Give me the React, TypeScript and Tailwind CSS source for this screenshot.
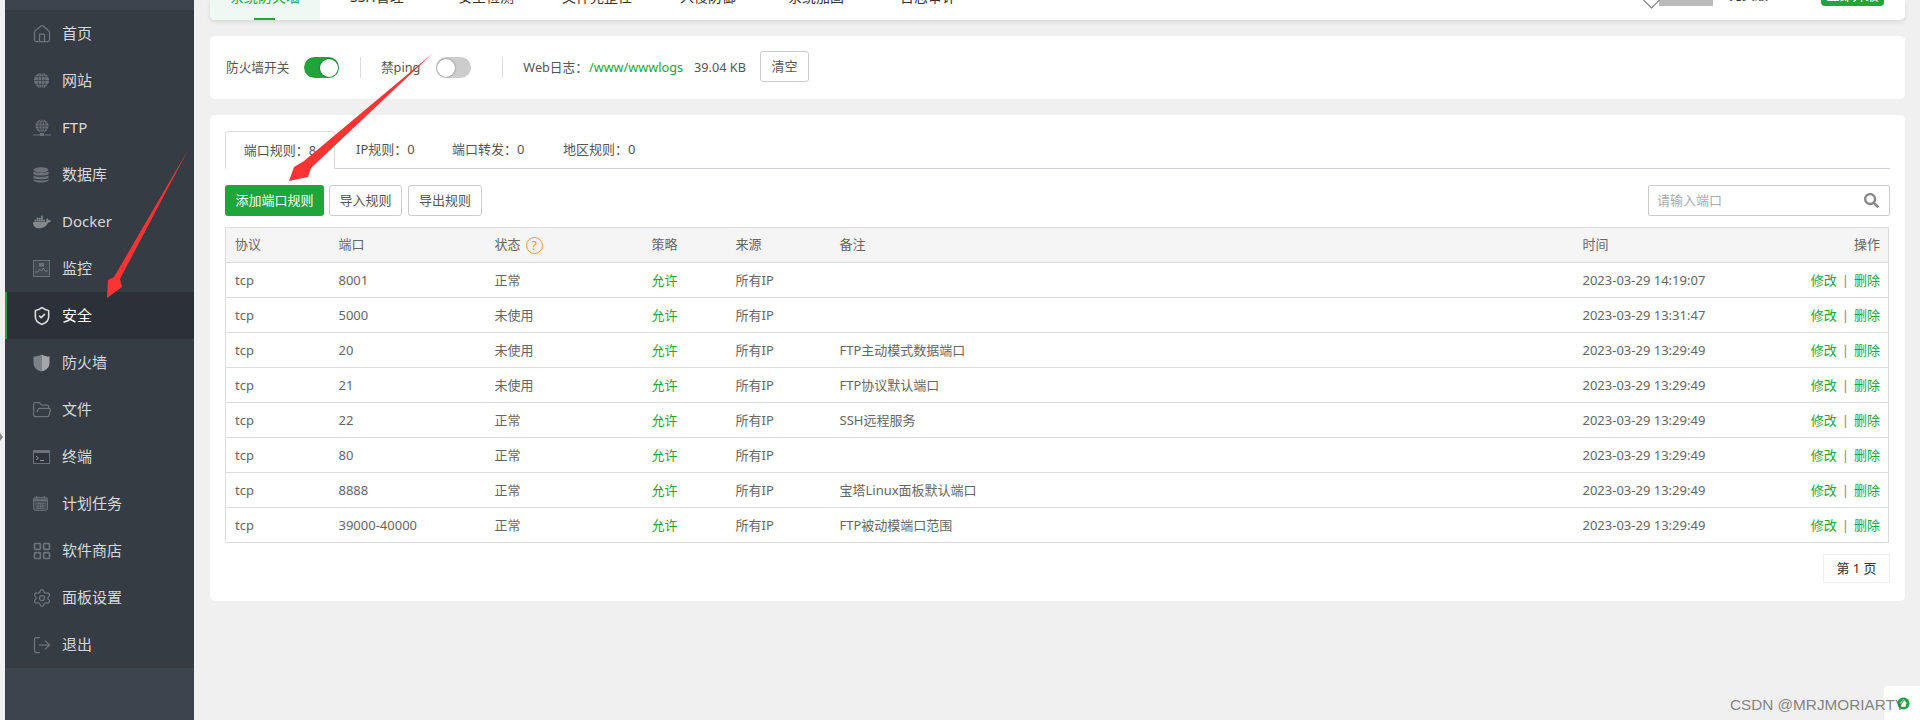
import { FaDocker, FaSearch } from "react-icons/fa";
import { FolderOpen, Home, LayoutGrid, LogOut, Settings, ShieldCheck } from "lucide-react";

const GlobeIcon = () => (
  <svg viewBox="0 0 18 18" className="w-[17px] h-[17px]" fill="none">
    <circle cx="9" cy="9" r="8" fill="#6c7177" />
    <g stroke="#363c44" strokeWidth="0.7">
      <ellipse cx="9" cy="9" rx="3.6" ry="8" />
      <path d="M9 1v16M1 9h16M2 5h14M2 13h14" />
    </g>
  </svg>
);

const FtpIcon = () => (
  <svg viewBox="0 0 18 18" className="w-[18px] h-[18px]" fill="none">
    <circle cx="9" cy="7" r="6.5" fill="#6c7177" />
    <g stroke="#363c44" strokeWidth="0.7">
      <ellipse cx="9" cy="7" rx="3" ry="6.5" />
      <path d="M9 .5v13M2.5 7h13M3.5 4h11M3.5 10h11" />
    </g>
    <path d="M0 16h18" stroke="#6c7177" strokeWidth="1" />
    <rect x="7" y="14" width="4" height="3" fill="#6c7177" />
  </svg>
);

const DatabaseIcon = () => (
  <svg viewBox="0 0 16 16" className="w-[16px] h-[16px]">
    <ellipse cx="8" cy="2.8" rx="7.5" ry="2.6" fill="#6c7177" />
    <path d="M.5 4.4C2 6 14 6 15.5 4.4V7.2C14 9 2 9 .5 7.2Z" fill="#6c7177" />
    <path d="M.5 8.4C2 10.2 14 10.2 15.5 8.4V11C14 12.8 2 12.8 .5 11Z" fill="#6c7177" />
    <path d="M.5 12.2C2 14 14 14 15.5 12.2V13.2C14 16.4 2 16.4 .5 13.2Z" fill="#6c7177" />
  </svg>
);

const MonitorIcon = () => (
  <svg viewBox="0 0 17 17" className="w-[17px] h-[17px]" fill="none">
    <rect x="0.5" y="0.5" width="16" height="16" fill="#42484f" stroke="#6c7177" />
    <path d="M2 12h3l1.5-3 2 2 2-3 1.5 3H15" stroke="#7a7f85" strokeWidth="0.9" />
    <rect x="6" y="3" width="5" height="3.5" fill="#6c7177" />
  </svg>
);

const HalfShieldIcon = () => (
  <svg viewBox="0 0 17 18" className="w-[17px] h-[18px]">
    <path d="M8.5 0.5 C6 2 3 2.6 0.5 2.6 V9 C0.5 13.5 4 16.5 8.5 17.5Z" fill="#7d8288" />
    <path d="M8.5 0.5 C11 2 14 2.6 16.5 2.6 V9 C16.5 13.5 13 16.5 8.5 17.5Z" fill="#a3a6aa" />
  </svg>
);

const TerminalIcon = () => (
  <svg viewBox="0 0 17 14" className="w-[17px] h-[14px]" fill="none">
    <rect x="0.5" y="0.5" width="16" height="13" fill="#2f343b" stroke="#6c7177" />
    <path d="M0 0h17v3H0Z" fill="#6c7177" />
    <path d="M3 6l2.5 2L3 10M7 10.5h4" stroke="#90949a" strokeWidth="1" />
  </svg>
);

const CalendarIcon = () => (
  <svg viewBox="0 0 16 16" className="w-[15px] h-[15px]" fill="none">
    <rect x="0.5" y="1.5" width="15" height="14" rx="2" fill="#4a5057" stroke="#6c7177" />
    <path d="M0 4.5h16" stroke="#6c7177" strokeWidth="2" />
    <path d="M4 0v3M12 0v3" stroke="#6c7177" strokeWidth="1.3" />
    <path d="M3 8h10M3 10.5h10M3 13h10M5.5 7v7M8 7v7M10.5 7v7" stroke="#6c7177" strokeWidth="0.7" />
  </svg>
);

const lucideProps = { size: 20, color: "#6f747a", strokeWidth: 1.5, className: "-ml-[1px]" };

const menuItems = [
  { label: "首页", icon: <Home {...lucideProps} /> },
  { label: "网站", icon: <GlobeIcon /> },
  { label: "FTP", icon: <FtpIcon /> },
  { label: "数据库", icon: <DatabaseIcon /> },
  { label: "Docker", icon: <FaDocker size={18} color="#85898e" /> },
  { label: "监控", icon: <MonitorIcon /> },
  { label: "安全", icon: <ShieldCheck size={20} color="#dcdee0" strokeWidth={1.9} className="-ml-[1px]" />, active: true },
  { label: "防火墙", icon: <HalfShieldIcon /> },
  { label: "文件", icon: <FolderOpen {...lucideProps} /> },
  { label: "终端", icon: <TerminalIcon /> },
  { label: "计划任务", icon: <CalendarIcon /> },
  { label: "软件商店", icon: <LayoutGrid {...lucideProps} strokeWidth={2} /> },
  { label: "面板设置", icon: <Settings {...lucideProps} /> },
  { label: "退出", icon: <LogOut {...lucideProps} /> },
];

const topTabs = [
  { label: "SSH管理", className: "ml-[30px] w-[108px]" },
  { label: "安全检测", className: "w-[104px]" },
  { label: "文件完整性", className: "w-[118px]" },
  { label: "入侵防御", className: "w-[108px]" },
  { label: "系统加固", className: "w-[112px]" },
  { label: "日志审计", className: "" },
];

const rows = [
  { port: "8001", status: "正常", note: "", time: "2023-03-29 14:19:07" },
  { port: "5000", status: "未使用", note: "", time: "2023-03-29 13:31:47" },
  { port: "20", status: "未使用", note: "FTP主动模式数据端口", time: "2023-03-29 13:29:49" },
  { port: "21", status: "未使用", note: "FTP协议默认端口", time: "2023-03-29 13:29:49" },
  { port: "22", status: "正常", note: "SSH远程服务", time: "2023-03-29 13:29:49" },
  { port: "80", status: "正常", note: "", time: "2023-03-29 13:29:49" },
  { port: "8888", status: "正常", note: "宝塔Linux面板默认端口", time: "2023-03-29 13:29:49" },
  { port: "39000-40000", status: "正常", note: "FTP被动模端口范围", time: "2023-03-29 13:29:49" },
];

function Toggle({ on }: { on: boolean }) {
  return (
    <div
      className={`w-[35px] h-[21px] rounded-full flex items-center p-[1px] ${
        on ? "bg-[#20a53a] justify-end" : "bg-[#ccc] justify-start"
      }`}
    >
      <div className="w-[18px] h-[18px] rounded-full bg-white shadow-[0_0_2px_rgba(0,0,0,0.5)]" />
    </div>
  );
}

function OutlineButton({ children, className = "" }: { children: React.ReactNode; className?: string }) {
  return (
    <button className={`h-[31px] border border-[#ccc] rounded-[3px] bg-white text-[#555] text-[13px] ${className}`}>
      {children}
    </button>
  );
}

export default function App() {
  return (
    <div className="relative flex w-[1920px] h-[720px] overflow-hidden bg-[#f0f0f0] pl-[5px] font-['Noto_Sans','Noto_Sans_CJK_SC',sans-serif]">
      {/* 左侧菜单 */}
      <div className="w-[189px] shrink-0 bg-[#3c444d] pt-[10px]">
        <div className="bg-[#363c44]">
          {menuItems.map((item) => (
            <div
              key={item.label}
              className={`h-[47px] flex items-center text-[15px] pl-[28px] border-l-2 ${
                item.active
                  ? "bg-[#2c3038] border-[#20a53a] text-white"
                  : "border-transparent text-[#d5d9de]"
              }`}
            >
              <span className="w-[29px] -ml-[2px] flex items-center">{item.icon}</span>
              <span>{item.label}</span>
            </div>
          ))}
        </div>
      </div>

      <div className="flex-1 pl-[16px] pr-[15px] flex flex-col">
        {/* 顶部标签 */}
        <div className="h-[20px] bg-white rounded-b-[5px] shadow-[0_2px_4px_rgba(0,0,0,0.1)] flex overflow-hidden shrink-0 text-[14px]">
          <div className="relative w-[110px] bg-[#eff9f3] text-[#20a53a] flex justify-center">
            <span className="-mt-[13px] h-[20px] leading-[20px]">系统防火墙</span>
            <div className="absolute left-[44px] bottom-0 w-[21px] h-[2px] bg-[#20a53a]" />
          </div>
          {topTabs.map((tab, i) => (
            <div key={i} className={`${tab.className} text-[#333] -mt-[13px] h-[20px] leading-[20px]`}>
              {tab.label}
            </div>
          ))}
          <div className="ml-auto flex mr-[21px]">
            <div className="flex items-start mr-[16px]">
              <div className="w-[13px] h-[13px] rotate-45 border border-[#777] -mt-[7px] mr-[1px]" />
              <div className="w-[54px] h-[6px] bg-[#bbb] overflow-hidden text-center text-[13px] leading-[20px] text-[#888]">
                <div className="-mt-[17px]">企业版</div>
              </div>
            </div>
            <span className="text-[13px] text-[#333] -mt-[16px] h-[20px] leading-[20px]">免费版</span>
            <span className="text-[12px] text-[#333] -mt-[16px] h-[20px] leading-[20px] ml-[11px]">7.9.8</span>
            <div className="ml-[15px] w-[63px] h-[6px] bg-[#20a53a] rounded-b-[4px] overflow-hidden text-center text-[13px] leading-[20px] text-white">
              <div className="-mt-[15px]">立即升级</div>
            </div>
          </div>
        </div>

        {/* 防火墙开关 */}
        <div className="mt-[16px] h-[63px] bg-white rounded-[5px] flex items-center pl-[16px] text-[12.7px] text-[#555] shrink-0">
          <span>防火墙开关</span>
          <div className="ml-[14.5px]">
            <Toggle on />
          </div>
          <div className="w-px h-[21px] bg-[#ddd] ml-[21px] mr-[20px]" />
          <span>禁ping</span>
          <div className="ml-[16px]">
            <Toggle on={false} />
          </div>
          <div className="w-px h-[21px] bg-[#ddd] ml-[31px] mr-[20px]" />
          <span>Web日志：</span>
          <span className="ml-[1px] text-[#20a53a]">/www/wwwlogs</span>
          <span className="ml-[11px] text-[#555]">39.04 KB</span>
          <OutlineButton className="ml-[14px] w-[49px] -translate-y-[1px]">清空</OutlineButton>
        </div>

        {/* 端口规则 */}
        <div className="mt-[16px] h-[486px] bg-white rounded-[5px] pt-[16px] px-[15px] shrink-0 text-[13px] text-[#666]">
          <div className="h-[38px] flex border-b border-[#cfcfe0] text-[#555]">
            <div className="w-[110px] h-[38px] pt-[1px] bg-white border border-[#ddd] border-b-white rounded-t-[3px] flex items-center justify-center">
              端口规则：8
            </div>
            <div className="ml-[21px] pt-[1px] flex items-center w-[96px]">IP规则：0</div>
            <div className="pt-[1px] flex items-center w-[111px]">端口转发：0</div>
            <div className="pt-[1px] flex items-center">地区规则：0</div>
          </div>

          <div className="mt-[16px] h-[31px] flex items-center">
            <button className="h-[31px] w-[99px] rounded-[3px] bg-[#20a53a] text-white text-[13px]">
              添加端口规则
            </button>
            <OutlineButton className="ml-[5px] w-[73px]">导入规则</OutlineButton>
            <OutlineButton className="ml-[6px] w-[74px]">导出规则</OutlineButton>
            <div className="ml-auto w-[242px] h-[31px] border border-[#ccc] rounded-[2px] flex items-center pl-[8px] pr-[10px]">
              <span className="text-[#aaa]">请输入端口</span>
              <FaSearch size={15} color="#888" className="ml-auto" />
            </div>
          </div>

          <table className="mt-[11px] w-[1664px] table-fixed border-collapse border border-[#ddd]">
            <colgroup>
              <col className="w-[103px]" />
              <col className="w-[157px]" />
              <col className="w-[157px]" />
              <col className="w-[84px]" />
              <col className="w-[104px]" />
              <col className="w-[743px]" />
              <col className="w-[158px]" />
              <col />
            </colgroup>
            <thead>
              <tr className="h-[35px] bg-[#f5f5f5] text-left">
                <th className="font-normal pl-[9px]">协议</th>
                <th className="font-normal pl-[10px]">端口</th>
                <th className="font-normal pl-[9px]">
                  <span className="inline-flex items-center">
                    状态
                    <span className="ml-[5px] w-[17px] h-[17px] rounded-full border-[1.5px] border-[#f5923e] text-[#f5923e] text-[13px] leading-[14px] text-center">
                      ?
                    </span>
                  </span>
                </th>
                <th className="font-normal pl-[9px]">策略</th>
                <th className="font-normal pl-[9px]">来源</th>
                <th className="font-normal pl-[9px]">备注</th>
                <th className="font-normal pl-[9px]">时间</th>
                <th className="font-normal pr-[8px] text-right">操作</th>
              </tr>
            </thead>
            <tbody>
              {rows.map((row) => (
                <tr key={row.port} className="h-[35px] border-t border-[#ddd]">
                  <td className="pl-[9px] pt-[2px]">tcp</td>
                  <td className="pl-[10px] pt-[2px]">{row.port}</td>
                  <td className="pl-[9px] pt-[2px]">{row.status}</td>
                  <td className="pl-[9px] pt-[2px] text-[#20a53a]">允许</td>
                  <td className="pl-[9px] pt-[2px]">所有IP</td>
                  <td className="pl-[9px] pt-[2px]">{row.note}</td>
                  <td className="pl-[9px] pt-[2px] whitespace-nowrap">{row.time}</td>
                  <td className="pr-[8px] pt-[2px] text-right whitespace-nowrap text-[#20a53a]">
                    修改<span className="text-[#7a8a9a] mx-[5px]">|</span>删除
                  </td>
                </tr>
              ))}
            </tbody>
          </table>

          <div className="mt-[11px] flex justify-end">
            <div className="w-[67px] h-[29px] border border-[#eee] flex items-center justify-center text-[#333] text-[13px] whitespace-pre">
              第 1 页
            </div>
          </div>
        </div>
      </div>

      {/* 左边折叠小三角 */}
      <div className="absolute left-0 top-[433px] border-y-[4px] border-y-transparent border-l-[3px] border-l-[#888]" />

      {/* 红色箭头 */}
      <svg className="absolute left-0 top-0 w-[1920px] h-[720px] pointer-events-none" viewBox="0 0 1920 720">
        <polygon points="433,53 311,168 308,177 289,181 294,167 304,161" fill="#fb3333" />
        <polygon points="188,150 120,279 122,287 107,298 108,280 114,277" fill="#fb3333" />
      </svg>

      {/* 右下角 */}
      <div className="absolute right-0 bottom-0 w-[36px] h-[34px] bg-white rounded-tl-[4px] flex items-center justify-center">
        <svg viewBox="0 0 14 14" className="w-[13px] h-[13px] ml-[2px]">
          <circle cx="7" cy="7" r="6.5" fill="#20a53a" />
          <path d="M7 2.5 11 7H9.5v3.5h-5V7H3Z" fill="#fff" />
        </svg>
      </div>
      <div className="absolute left-[1730px] top-[695px] text-[15.3px] leading-[20px] text-[#666]/80 font-['Liberation_Sans',sans-serif] whitespace-nowrap">
        CSDN @MRJMORIARTY
      </div>
    </div>
  );
}
